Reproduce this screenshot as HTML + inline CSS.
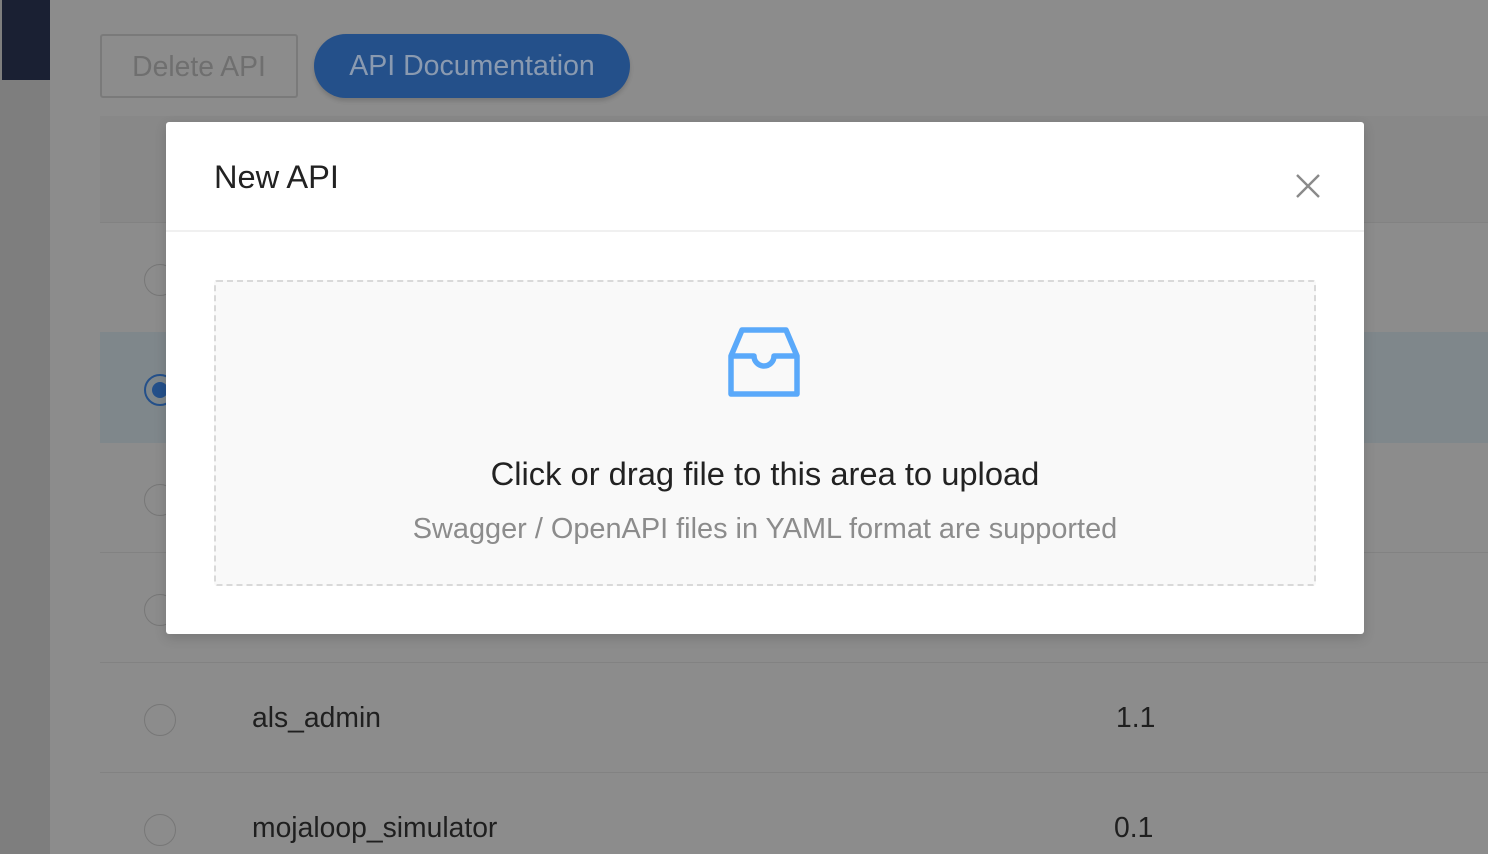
<!DOCTYPE html>
<html><head><meta charset="utf-8"><style>
*{margin:0;padding:0;box-sizing:border-box}
body{width:1488px;height:854px;overflow:hidden;background:#8c8c8c;font-family:"Liberation Sans",Helvetica,Arial,sans-serif;position:relative}
.abs{position:absolute}
.side{left:0;top:0;width:50px;height:854px;background:#7e7e7e}
.sidetop{left:2px;top:0;width:48px;height:80px;background:#1a2033}
.line{left:100px;width:1388px;height:1px;background:#828282}
.radio{width:32px;height:32px;border:1.5px solid #777;border-radius:50%;left:144px}
.txt{font-size:28.3px;color:#1f1f1f}
</style></head><body>
<div class="abs side"></div>
<div class="abs sidetop"></div>
<div class="abs" style="left:100px;top:34px;width:198px;height:64px;border:2px solid #7a7a7a;border-radius:3px;color:#6f6f6f;font-size:28.3px;line-height:60px;text-align:center">Delete API</div>
<div class="abs" style="left:314px;top:34px;width:316px;height:64px;background:#24508a;border-radius:32px;color:#8a9ab0;font-size:28.5px;line-height:64px;text-align:center;box-shadow:0 3px 4px rgba(0,0,0,.15)">API Documentation</div>
<div class="abs" style="left:100px;top:116px;width:1388px;height:106px;background:#888"></div>
<div class="abs line" style="top:222px"></div>
<div class="abs" style="left:100px;top:332px;width:1388px;height:111px;background:#7f878b"></div>
<div class="abs line" style="top:552px"></div>
<div class="abs line" style="top:662px"></div>
<div class="abs line" style="top:772px"></div>
<div class="abs radio" style="top:264px"></div>
<div class="abs radio" style="top:374px;border:2px solid #24508a;padding:6px"><div style="width:16px;height:16px;border-radius:50%;background:#24508a"></div></div>
<div class="abs radio" style="top:484px"></div>
<div class="abs radio" style="top:594px"></div>
<div class="abs radio" style="top:704px"></div>
<div class="abs radio" style="top:814px"></div>
<div class="abs txt" style="left:252px;top:701px">als_admin</div>
<div class="abs txt" style="left:1116px;top:701px">1.1</div>
<div class="abs txt" style="left:252px;top:811px">mojaloop_simulator</div>
<div class="abs txt" style="left:1114px;top:811px">0.1</div>

<div class="abs" style="left:166px;top:122px;width:1198px;height:512px;background:#fff;border-radius:3px;box-shadow:0 4px 12px rgba(0,0,0,.15)">
  <div class="abs" style="left:48px;top:36px;font-size:32.6px;color:#222">New API</div>
  <svg class="abs" style="left:1128px;top:50px" width="30" height="30" viewBox="0 0 30 30"><path d="M3 3L25 25M25 3L3 25" stroke="#8a8a8a" stroke-width="2.4" fill="none"/></svg>
  <div class="abs" style="left:0;top:108px;width:1198px;height:2px;background:#f0f0f0"></div>
  <div class="abs" style="left:48px;top:158px;width:1102px;height:306px;background:#f9f9f9;border:2px dashed #d9d9d9;border-radius:3px"></div>
  <svg class="abs" style="left:560px;top:202px" width="76" height="76" viewBox="0 0 76 76"><path d="M5 32L16 6H60L71 32V70H5Z M5 32H28A10 10 0 0 0 48 32H71" stroke="#5aa9fa" stroke-width="5.5" fill="none" stroke-linejoin="round"/></svg>
  <div class="abs" style="left:0;width:1198px;top:333px;text-align:center;font-size:32.7px;color:#222">Click or drag file to this area to upload</div>
  <div class="abs" style="left:0;width:1198px;top:391px;text-align:center;font-size:28.9px;color:#8c8c8c">Swagger / OpenAPI files in YAML format are supported</div>
</div>
</body></html>
